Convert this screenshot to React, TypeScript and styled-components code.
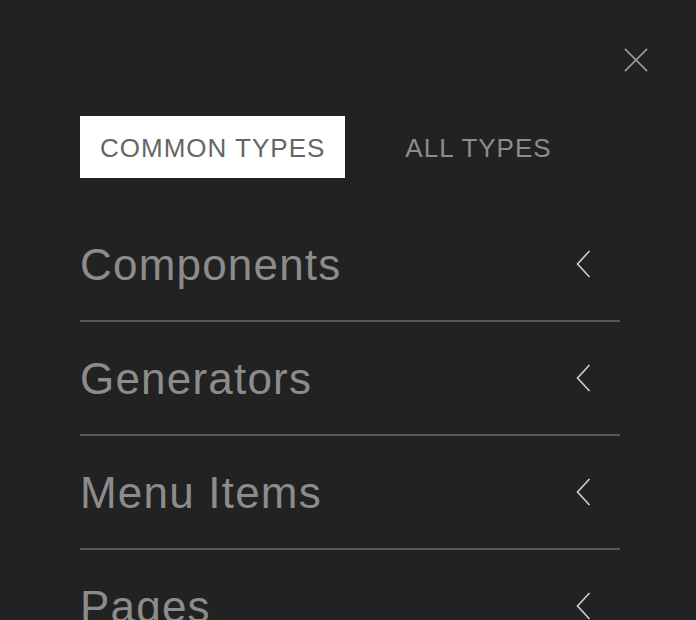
import React, { useState } from "react";
import styled, { createGlobalStyle } from "styled-components";

const Global = createGlobalStyle`
  html, body {
    margin: 0;
    padding: 0;
    background: #222222;
    overflow: hidden;
  }
  body {
    font-family: "Liberation Sans", Arial, Helvetica, sans-serif;
  }
`;

const Panel = styled.div`
  min-height: 620px;
  background: #222222;
  padding: 48px 48px 0 80px;
  box-sizing: border-box;
`;

const TopBar = styled.div`
  display: flex;
  justify-content: flex-end;
`;

const CloseButton = styled.button`
  width: 24px;
  height: 24px;
  padding: 0;
  border: 0;
  background: transparent;
  display: flex;
  align-items: center;
  justify-content: center;
  cursor: pointer;
`;

const Tabs = styled.div`
  display: flex;
  gap: 40px;
  margin-top: 44px;
`;

const Tab = styled.button<{ $active?: boolean }>`
  height: 62px;
  padding: 2px 20px 0;
  border: 0;
  background: ${(p) => (p.$active ? "#ffffff" : "transparent")};
  color: ${(p) => (p.$active ? "#666666" : "#8c8c8c")};
  font-family: "Liberation Sans", Arial, sans-serif;
  font-size: 26px;
  letter-spacing: 1px;
  line-height: 1;
  cursor: pointer;
`;

const List = styled.ul`
  list-style: none;
  margin: 30px 0 0;
  padding: 0;
  width: 540px;
`;

const Row = styled.li`
  height: 112px;
  border-bottom: 2px solid #555555;
  display: flex;
  align-items: center;
  justify-content: space-between;
`;

const Title = styled.span`
  font-size: 44px;
  letter-spacing: 1.2px;
  color: #8c8c8c;
  line-height: 1.15;
  padding-top: 2px;
`;

const Chevron = styled.span`
  display: flex;
  margin-right: 29px;
`;

const items = ["Components", "Generators", "Menu Items", "Pages"];

export default function App() {
  const [tab, setTab] = useState(0);
  return (
    <>
      <Global />
      <Panel>
        <TopBar>
          <CloseButton aria-label="Close">
            <svg width="26" height="26" viewBox="0 0 26 26">
              <path d="M1 1 L25 25 M25 1 L1 25" stroke="#9a9a9a" strokeWidth="1.8" fill="none" />
            </svg>
          </CloseButton>
        </TopBar>
        <Tabs>
          <Tab $active={tab === 0} onClick={() => setTab(0)}>COMMON TYPES</Tab>
          <Tab $active={tab === 1} onClick={() => setTab(1)}>ALL TYPES</Tab>
        </Tabs>
        <List>
          {items.map((it) => (
            <Row key={it}>
              <Title>{it}</Title>
              <Chevron>
                <svg width="15" height="28" viewBox="0 0 15 28">
                  <path d="M13.5 1 L1.5 14 L13.5 27" stroke="#cfcfcf" strokeWidth="1.6" fill="none" />
                </svg>
              </Chevron>
            </Row>
          ))}
        </List>
      </Panel>
    </>
  );
}
